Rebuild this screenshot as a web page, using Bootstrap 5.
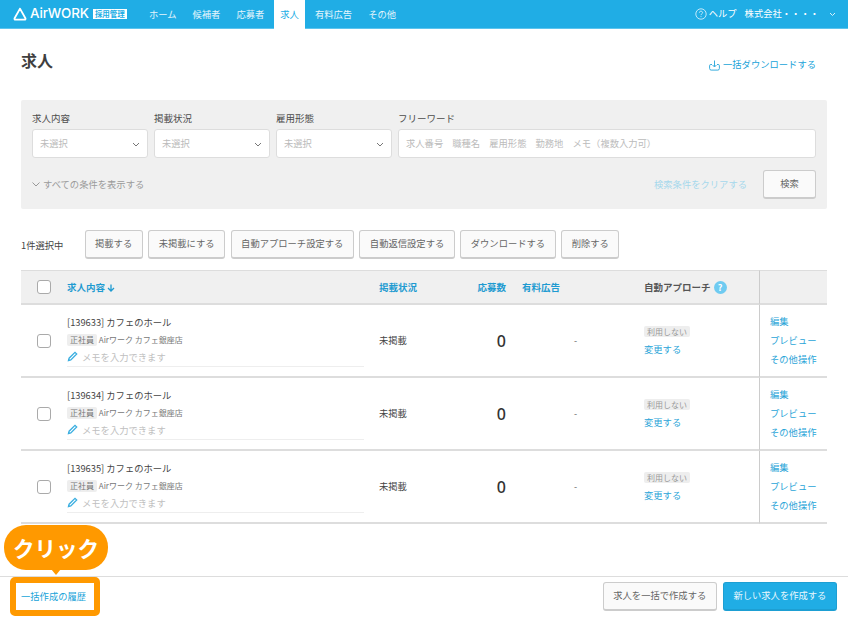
<!DOCTYPE html>
<html lang="ja">
<head>
<meta charset="utf-8">
<title>求人</title>
<link href="https://cdn.jsdelivr.net/npm/bootstrap@5.3.0/dist/css/bootstrap.min.css" rel="stylesheet">
<style>
html,body{height:100%}
body{font-family:"Noto Sans CJK JP","Noto Sans",sans-serif;font-size:9.3px;color:#444;overflow:hidden;position:relative}
.topbar{height:29px;background:#20ade5;border-bottom:1px solid #5cc4ee;color:#fff;padding:0 12px 0 13px}
.brand-word{font-family:"Inter",sans-serif;font-size:13.4px;font-weight:500;letter-spacing:-.1px;line-height:1;margin-left:3px}
.brand-tag{background:#fff;color:#20ade5;font-size:7.5px;font-weight:700;line-height:10px;width:34px;text-align:center;margin-left:4px}
.tabs{margin-left:14px;height:29px}
.tab-item{padding:0 8px;color:#e4f5fc;line-height:28px}
.tab-item.on{background:#fff;color:#20ade5;padding:0 6px;margin:0 2px;height:29px}
.help-txt{margin:0 8px 0 2px}
.chev-top{margin-left:10px}
.pagehead{padding:0 32px 0 21px;height:71px}
.pagehead h1{font-size:16px;font-weight:700;margin:0 0 10px;color:#3f3f3f;line-height:1}
.dl-link{color:#20a3d9;text-decoration:none;margin-top:1px}
.dl-icon{margin-right:3px}
.filterbox{margin:0 21px;height:109px;background:#f0f0f0;border-radius:2px;padding:11px 11px 0}
.fld-lab{display:block;height:18px;line-height:14px;font-size:9.5px;color:#4c4c4c;margin:0}
.fld-s{width:116px}
.fld-gap{gap:6px}
.fakesel,.fakeinp{height:29px;background:#fff;border:1px solid #ddd;border-radius:3px;color:#bbb;padding:1px 7px 0;font-size:9.3px}
.fakeinp{word-spacing:7px}
.morelink{color:#9a9a9a;font-size:9.3px}
.more-ico{margin-right:3px}
.clearlink{color:#a6d8ec;text-decoration:none;margin-right:16px}
.plainbtn{height:29px;padding:0 9.5px;font-size:9.3px;color:#666;background:#fafafa;border:1px solid #ccc;border-bottom-width:2px;border-radius:3px;line-height:1}
.plainbtn:hover{background:#fafafa;color:#666;border-color:#ccc}
.searchbtn{width:53px;padding:0}
.actionbar{margin:21px 0 0 21px;gap:5.5px;height:29px}
.sel-count{width:58px;font-size:9.3px;color:#444;margin-top:2px}
.jobs{width:806px;margin:11px 0 0 21px;table-layout:fixed;border-collapse:separate;border-spacing:0}
.jobs th{height:35px;background:#f0f0f0;border-top:1px solid #ddd;border-bottom:2px solid #ddd;font-size:9.5px;font-weight:700;padding:0;vertical-align:middle}
.jobs td{height:73px;border-bottom:2px solid #ddd;padding:0;vertical-align:middle}
.jobs .sep{border-left:1px solid #ccc;padding-left:10px}
.jobs .cnt{text-align:right;padding-right:8px}
.jobs .paid-h{padding-left:8px}
.jobs .paid{padding-left:60px}
.sortlink{color:#1f9bd1;text-decoration:none}
.thplain{color:#555}
.qmark{display:inline-block;width:13px;height:13px;border-radius:50%;background:#6fcbf1;color:#fff;font-size:9px;line-height:13px;text-align:center;margin-left:3px}
.boxck{display:block;width:14px;height:14px;border:1px solid #aaa;border-radius:3px;background:#fff;margin-left:16px}
.job-title{font-size:9.3px;color:#444;line-height:14px}
.emp-chip{background:#eee;color:#777;font-size:8px;padding:0 3px;border-radius:2px;line-height:12px;display:inline-block}
.job-sub{font-size:8px;color:#777;margin-top:5px;line-height:12px}
.memo{width:297px;border-bottom:1px solid #eee;color:#c0c0c0;font-size:9.3px;line-height:14px;padding-bottom:2px;margin-top:4px}
.zero{font-size:16px;font-weight:500;color:#333;font-family:"Noto Sans",sans-serif}
.dash{font-size:9px;color:#666}
.use-chip{background:#eee;color:#999;font-size:8px;padding:0 3px;border-radius:2px;line-height:11px;display:inline-block}
.bluelink{display:block;color:#2aa5d8;text-decoration:none;line-height:19px}
.change{line-height:14px;margin-top:4px}
.bottombar{position:absolute;left:0;right:0;bottom:0;height:44px;border-top:1px solid #ddd;background:#fff;padding:0 11px 4px 21px}
.bottombtn{height:29px;padding:0 9.6px;font-size:9.3px;border-radius:3px;line-height:1}
.pri{background:#20ade5;color:#e9f8fe;border:1px solid #1d9fd3;border-bottom-width:2px;margin-left:6px}
.pri:hover{background:#20ade5;color:#e9f8fe;border-color:#1d9fd3}
.callout{position:absolute;left:4px;top:525px;width:104px;height:45px;border-radius:22px;background:#ff9900;color:#fff;font-size:21.5px;font-weight:700;line-height:45px;text-align:center}
.callout::after{content:"";position:absolute;left:47px;top:44px;border-style:solid;border-width:6px 5px 0;border-color:#ff9900 transparent transparent}
.outlinebox{position:absolute;left:10px;top:577px;width:90px;height:39px;border:6px solid #ff9900;border-radius:5px}
</style>
</head>
<body>
<header class="topbar d-flex align-items-center">
  <svg width="14" height="14" viewBox="0 0 14 14" fill="none" stroke="#fff" stroke-width="1.8" stroke-linejoin="round"><path d="M7 1.600 1.600 11.200c-.4.8 0 1.400.8 1.400h9.200c.8 0 1.200-.6.800-1.400z"/></svg>
  <span class="brand-word">AirWORK</span>
  <span class="brand-tag">採用管理</span>
  <nav class="tabs d-flex">
    <span class="tab-item">ホーム</span>
    <span class="tab-item">候補者</span>
    <span class="tab-item">応募者</span>
    <span class="tab-item on">求人</span>
    <span class="tab-item">有料広告</span>
    <span class="tab-item">その他</span>
  </nav>
  <div class="ms-auto d-flex align-items-center">
    <svg width="12" height="12" viewBox="0 0 12 12" fill="none" stroke="#eaf8fe" stroke-width=".8"><circle cx="6" cy="6" r="5.200"/><path d="M4.400 4.700C4.400 3.700 5.100 3.200 6 3.200s1.600.6 1.600 1.400c0 1.200-1.600 1.200-1.600 2.500"/><path d="M6 8.200v.9"/></svg>
    <span class="help-txt">ヘルプ</span>
    <span>株式会社・・・・</span>
    <svg class="chev-top" width="7" height="5" viewBox="0 0 7 5" fill="none" stroke="#d8f1fb" stroke-width="1"><path d="M1 1l2.500 2.500L6 1"/></svg>
  </div>
</header>

<div class="pagehead d-flex align-items-center justify-content-between">
  <h1>求人</h1>
  <a class="dl-link d-flex align-items-center" href="#">
    <svg class="dl-icon" width="11" height="11" viewBox="0 0 11 11" fill="none" stroke="#20a3d9" stroke-width=".9"><path d="M3 4.500H1.800A1.200 1.200 0 0 0 .6 5.700v2.800a1.600 1.600 0 0 0 1.600 1.600h6.600a1.600 1.600 0 0 0 1.600-1.600V5.700A1.200 1.200 0 0 0 9.200 4.500H8"/><path d="M5.500.5v6M3.600 5l1.900 2 1.900-2"/></svg>一括ダウンロードする</a>
</div>

<section class="filterbox">
  <div class="d-flex fld-gap">
    <div class="fld-s"><label class="fld-lab">求人内容</label>
      <div class="fakesel d-flex align-items-center justify-content-between"><span>未選択</span><svg width="8" height="5" viewBox="0 0 8 5" fill="none" stroke="#777" stroke-width="1"><path d="M1 1l3 3 3-3"/></svg></div></div>
    <div class="fld-s"><label class="fld-lab">掲載状況</label>
      <div class="fakesel d-flex align-items-center justify-content-between"><span>未選択</span><svg width="8" height="5" viewBox="0 0 8 5" fill="none" stroke="#777" stroke-width="1"><path d="M1 1l3 3 3-3"/></svg></div></div>
    <div class="fld-s"><label class="fld-lab">雇用形態</label>
      <div class="fakesel d-flex align-items-center justify-content-between"><span>未選択</span><svg width="8" height="5" viewBox="0 0 8 5" fill="none" stroke="#777" stroke-width="1"><path d="M1 1l3 3 3-3"/></svg></div></div>
    <div class="flex-grow-1"><label class="fld-lab">フリーワード</label>
      <div class="fakeinp d-flex align-items-center"><span>求人番号 職種名 雇用形態 勤務地 メモ（複数入力可）</span></div></div>
  </div>
  <div class="d-flex align-items-center mt-2 pt-1">
    <span class="morelink d-flex align-items-center"><svg class="more-ico" width="8" height="5" viewBox="0 0 8 5" fill="none" stroke="#999" stroke-width="1"><path d="M.5.500 4 4 7.500.5"/></svg>すべての条件を表示する</span>
    <a class="clearlink ms-auto" href="#">検索条件をクリアする</a>
    <button type="button" class="btn plainbtn searchbtn">検索</button>
  </div>
</section>

<div class="actionbar d-flex align-items-center">
  <span class="sel-count">1件選択中</span>
  <button type="button" class="btn plainbtn">掲載する</button>
  <button type="button" class="btn plainbtn">未掲載にする</button>
  <button type="button" class="btn plainbtn">自動アプローチ設定する</button>
  <button type="button" class="btn plainbtn">自動返信設定する</button>
  <button type="button" class="btn plainbtn">ダウンロードする</button>
  <button type="button" class="btn plainbtn">削除する</button>
</div>

<table class="jobs">
  <colgroup><col style="width:46px"><col style="width:312px"><col style="width:91px"><col style="width:44px"><col style="width:130px"><col style="width:115px"><col style="width:68px"></colgroup>
  <thead><tr>
    <th><span class="boxck"></span></th>
    <th><a class="sortlink" href="#">求人内容 <svg width="8" height="8" viewBox="0 0 8 8" fill="none" stroke="#1f9bd1" stroke-width="1.300"><path d="M4 .5V7M1 4l3 3 3-3"/></svg></a></th>
    <th><a class="sortlink" href="#">掲載状況</a></th>
    <th class="cnt"><a class="sortlink" href="#">応募数</a></th>
    <th class="paid-h"><a class="sortlink" href="#">有料広告</a></th>
    <th><span class="thplain">自動アプローチ</span><span class="qmark">?</span></th>
    <th class="sep"></th>
  </tr></thead>
  <tbody>
    <tr>
      <td><span class="boxck"></span></td>
      <td><div class="job-title">[139633] カフェのホール</div>
        <div class="job-sub"><span class="emp-chip">正社員</span> Airワーク カフェ銀座店</div>
        <div class="memo d-flex align-items-center"><svg class="me-1" width="11" height="11" viewBox="0 0 11 11" fill="none" stroke="#3aaee0" stroke-width="1.300"><path d="M1.500 9.500l.6-2.300L8 1.300l1.700 1.700-5.900 5.900z"/></svg>メモを入力できます</div></td>
      <td>未掲載</td>
      <td class="cnt"><span class="zero">0</span></td>
      <td class="paid"><span class="dash">-</span></td>
      <td><span class="use-chip">利用しない</span><a class="bluelink change" href="#">変更する</a></td>
      <td class="sep"><a class="bluelink" href="#">編集</a><a class="bluelink" href="#">プレビュー</a><a class="bluelink" href="#">その他操作</a></td>
    </tr>
    <tr>
      <td><span class="boxck"></span></td>
      <td><div class="job-title">[139634] カフェのホール</div>
        <div class="job-sub"><span class="emp-chip">正社員</span> Airワーク カフェ銀座店</div>
        <div class="memo d-flex align-items-center"><svg class="me-1" width="11" height="11" viewBox="0 0 11 11" fill="none" stroke="#3aaee0" stroke-width="1.300"><path d="M1.500 9.500l.6-2.300L8 1.300l1.700 1.700-5.900 5.900z"/></svg>メモを入力できます</div></td>
      <td>未掲載</td>
      <td class="cnt"><span class="zero">0</span></td>
      <td class="paid"><span class="dash">-</span></td>
      <td><span class="use-chip">利用しない</span><a class="bluelink change" href="#">変更する</a></td>
      <td class="sep"><a class="bluelink" href="#">編集</a><a class="bluelink" href="#">プレビュー</a><a class="bluelink" href="#">その他操作</a></td>
    </tr>
    <tr>
      <td><span class="boxck"></span></td>
      <td><div class="job-title">[139635] カフェのホール</div>
        <div class="job-sub"><span class="emp-chip">正社員</span> Airワーク カフェ銀座店</div>
        <div class="memo d-flex align-items-center"><svg class="me-1" width="11" height="11" viewBox="0 0 11 11" fill="none" stroke="#3aaee0" stroke-width="1.300"><path d="M1.500 9.500l.6-2.300L8 1.300l1.700 1.700-5.900 5.900z"/></svg>メモを入力できます</div></td>
      <td>未掲載</td>
      <td class="cnt"><span class="zero">0</span></td>
      <td class="paid"><span class="dash">-</span></td>
      <td><span class="use-chip">利用しない</span><a class="bluelink change" href="#">変更する</a></td>
      <td class="sep"><a class="bluelink" href="#">編集</a><a class="bluelink" href="#">プレビュー</a><a class="bluelink" href="#">その他操作</a></td>
    </tr>
  </tbody>
</table>

<footer class="bottombar d-flex align-items-center">
  <a class="dl-link" href="#">一括作成の履歴</a>
  <button type="button" class="btn plainbtn bottombtn ms-auto">求人を一括で作成する</button>
  <button type="button" class="btn bottombtn pri">新しい求人を作成する</button>
</footer>
<div class="outlinebox"></div>
<div class="callout">クリック</div>
</body>
</html>
